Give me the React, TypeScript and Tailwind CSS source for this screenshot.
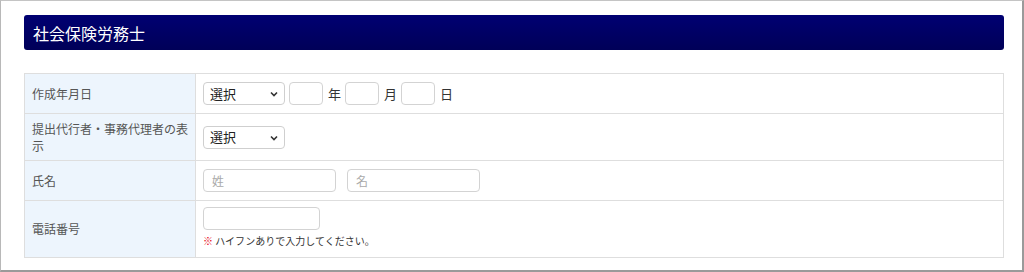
import React from "react";

const font = { fontFamily: '"Noto Sans CJK JP", "Noto Sans", sans-serif' };

function Select() {
  return (
    <div className="flex h-[23px] w-[82px] items-center justify-between rounded-[4px] border border-[#cfcfcf] bg-white pl-[6px] pr-[6px] text-[13px] text-[#222]">
      <span>選択</span>
      <svg width="8" height="6" viewBox="0 0 8 6" className="mt-[1px]">
        <path d="M1 1.5 L4 4.5 L7 1.5" fill="none" stroke="#333" strokeWidth="1.6" />
      </svg>
    </div>
  );
}

function Box({ w, placeholder }: { w: string; placeholder?: string }) {
  return (
    <div
      className={`flex h-[23px] ${w} items-center rounded-[4px] border border-[#d3d3d3] bg-white pl-[8px] text-[12px] text-[#aaa]`}
    >
      {placeholder}
    </div>
  );
}

export default function App() {
  return (
    <div
      style={font}
      className="h-[272px] w-[1024px] overflow-hidden border-t border-l border-r-2 border-b-2 border-t-[#c4c4c4] border-l-[#b8b8b8] border-r-[#9a9a9a] border-b-[#9a9a9a] bg-white pl-[23px] pr-[18px] pt-[14px]"
    >
      <div className="flex h-[35px] items-center rounded-[3px] bg-gradient-to-b from-[#000072] to-[#000058] pl-[9px] text-[16px] text-white">
        社会保険労務士
      </div>
      <div className="mt-[23px] border border-[#dedede] text-[12px] text-[#555]">
        <div className="flex h-[40px] border-b border-[#dedede]">
          <div className="flex w-[171px] shrink-0 items-center border-r border-[#dedede] bg-[#edf5fd] pl-[7px]">
            作成年月日
          </div>
          <div className="flex items-center gap-[4px] pl-[7px] text-[13px] text-[#333]">
            <Select />
            <Box w="w-[34px]" />
            <span className="ml-[1px]">年</span>
            <Box w="w-[34px]" />
            <span className="ml-[1px]">月</span>
            <Box w="w-[34px]" />
            <span className="ml-[1px]">日</span>
          </div>
        </div>
        <div className="flex h-[47px] border-b border-[#dedede]">
          <div className="flex w-[171px] shrink-0 items-center border-r border-[#dedede] bg-[#edf5fd] pl-[7px] pr-[3px] leading-[17px]">
            提出代行者・事務代理者の表示
          </div>
          <div className="flex items-center pl-[7px]">
            <Select />
          </div>
        </div>
        <div className="flex h-[40px] border-b border-[#dedede]">
          <div className="flex w-[171px] shrink-0 items-center border-r border-[#dedede] bg-[#edf5fd] pl-[7px]">
            氏名
          </div>
          <div className="flex items-center gap-[11px] pl-[7px]">
            <Box w="w-[133px]" placeholder="姓" />
            <Box w="w-[133px]" placeholder="名" />
          </div>
        </div>
        <div className="flex h-[56px]">
          <div className="flex w-[171px] shrink-0 items-center border-r border-[#dedede] bg-[#edf5fd] pl-[7px]">
            電話番号
          </div>
          <div className="flex flex-col pl-[7px] pt-[6px]">
            <Box w="w-[117px]" />
            <div className="mt-[4px] text-[10px] leading-[14px] text-[#333]">
              <span className="font-bold text-[#e60012]">※</span> ハイフンありで入力してください。
            </div>
          </div>
        </div>
      </div>
    </div>
  );
}
